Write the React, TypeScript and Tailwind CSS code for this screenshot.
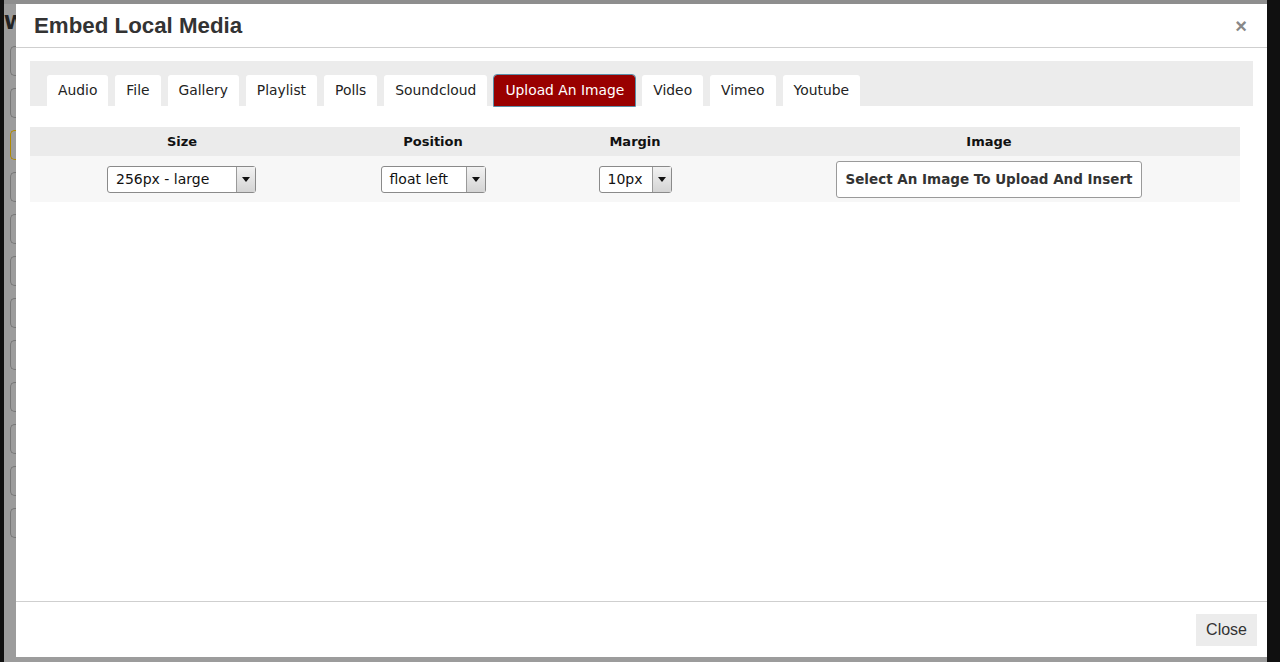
import React, { useState } from 'react';

const tabs = ['Audio', 'File', 'Gallery', 'Playlist', 'Polls', 'Soundcloud', 'Upload An Image', 'Video', 'Vimeo', 'Youtube'];

const Select: React.FC<{ value: string; width: string }> = ({ value, width }) => (
  <div className={`inline-flex h-[27px] ${width} items-stretch rounded-[3px] border border-[#8a8a8a] bg-white text-left shadow-[inset_0_0_0_1px_#fff]`}>
    <span className="flex-1 pl-[8px] text-[14px] leading-[25px] text-[#111]">{value}</span>
    <span className="flex w-[19px] items-center justify-center border-l border-[#9a9a9a] bg-gradient-to-b from-[#f2f2f2] to-[#d4d4d4]">
      <svg width="8" height="5" viewBox="0 0 8 5"><path d="M0 0h8L4 5z" fill="#111" /></svg>
    </span>
  </div>
);

export default function App() {
  const [active, setActive] = useState('Upload An Image');

  return (
    <div className="relative h-[662px] w-[1280px] overflow-hidden bg-[#101010] font-['DejaVu_Sans',sans-serif]">
      {/* dimmed page behind the modal */}
      <div className="ml-[4px] flex h-full w-[1263px] flex-col bg-[#9c9c9c]">
        <div className="h-[4px] bg-[#8e8e8e]" />
        <div className="flex w-[12px] flex-col gap-[12px] pt-[6px]">
          <span className="text-[20px] font-bold leading-[24px] text-[#222]">W</span>
          {Array.from({ length: 12 }).map((_, i) => (
            <div key={i} className={`ml-[6px] h-[30px] w-[8px] rounded-l-[5px] border border-r-0 ${i === 2 ? 'border-[#b08900]' : 'border-[#777]'}`} />
          ))}
        </div>
      </div>

      {/* modal */}
      <div className="absolute left-[16px] top-[4px] flex h-[653px] w-[1251px] flex-col bg-white">
        <div className="flex h-[44px] items-center justify-between border-b border-[#cfcfcf] pl-[18px] pr-[20px]">
          <h1 className="font-['Liberation_Sans',Arial,sans-serif] text-[22.3px] font-bold text-[#333]">Embed Local Media</h1>
          <span className="font-['Liberation_Sans',Arial,sans-serif] text-[20px] font-bold leading-none text-[#888]">×</span>
        </div>

        <div className="flex-1 px-[14px] pt-[13px]">
          <div className="flex h-[45px] items-end gap-[7px] bg-[#ececec] pl-[17px]">
            {tabs.map(t => (
              <button
                key={t}
                onClick={() => setActive(t)}
                className={`h-[31px] rounded-t-[3px] px-[11px] text-[13.85px] leading-[31px] ${
                  t === active ? 'bg-[#990000] text-white outline outline-1 outline-[#5b8fa8]' : 'bg-white text-[#222]'
                }`}
              >
                {t}
              </button>
            ))}
          </div>

          <table className="mt-[21px] w-[1210px] border-collapse text-center">
            <thead>
              <tr className="h-[29px] bg-[#ebebeb] text-[13px] font-bold text-[#111]">
                <th className="w-[304px]">Size</th>
                <th className="w-[198px]">Position</th>
                <th className="w-[206px]">Margin</th>
                <th>Image</th>
              </tr>
            </thead>
            <tbody>
              <tr className="h-[46px] bg-[#f7f7f7]">
                <td className="pr-[1px]"><Select value="256px - large" width="w-[149px]" /></td>
                <td><Select value="float left" width="w-[105px]" /></td>
                <td><Select value="10px" width="w-[73px]" /></td>
                <td>
                  <button className="h-[37px] rounded-[3px] border border-[#9a9a9a] bg-white px-[8px] text-[13.5px] font-bold text-[#333]">
                    Select An Image To Upload And Insert
                  </button>
                </td>
              </tr>
            </tbody>
          </table>
        </div>

        <div className="flex h-[56px] items-center justify-end border-t border-[#cfcfcf] pr-[10px]">
          <button className="h-[32px] bg-[#ececec] px-[10px] font-['Liberation_Sans',Arial,sans-serif] text-[16px] text-[#333]">Close</button>
        </div>
      </div>
    </div>
  );
}
